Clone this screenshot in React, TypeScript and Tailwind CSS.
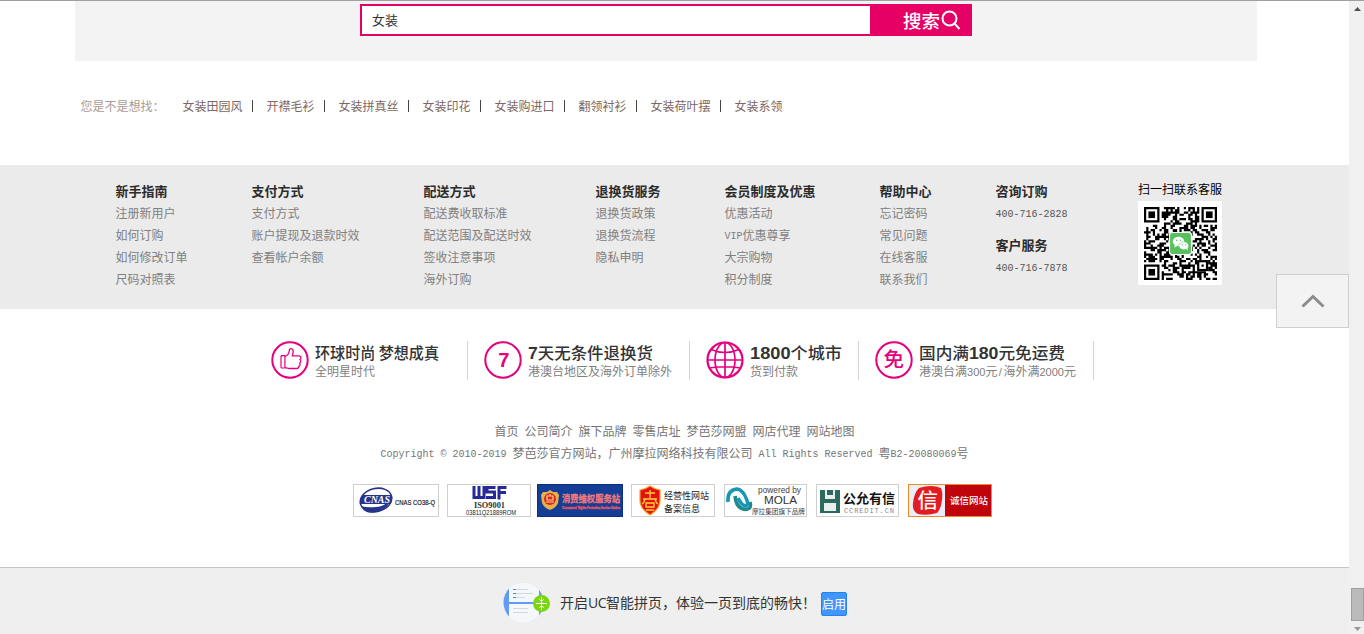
import type { ReactNode } from "react";

const suggestions = ["女装田园风", "开襟毛衫", "女装拼真丝", "女装印花", "女装购进口", "翻领衬衫", "女装荷叶摆", "女装系领"];

const helpColumns = [
  { title: "新手指南", width: "w-[136px]", links: ["注册新用户", "如何订购", "如何修改订单", "尺码对照表"] },
  { title: "支付方式", width: "w-[172px]", links: ["支付方式", "账户提现及退款时效", "查看帐户余额"] },
  { title: "配送方式", width: "w-[172px]", links: ["配送费收取标准", "配送范围及配送时效", "签收注意事项", "海外订购"] },
  { title: "退换货服务", width: "w-[129px]", links: ["退换货政策", "退换货流程", "隐私申明"] },
  { title: "会员制度及优惠", width: "w-[155px]", links: ["优惠活动", "VIP优惠尊享", "大宗购物", "积分制度"] },
  { title: "帮助中心", width: "w-[116px]", links: ["忘记密码", "常见问题", "在线客服", "联系我们"] },
];

const siteLinks = ["首页", "公司简介", "旗下品牌", "零售店址", "梦芭莎网盟", "网店代理", "网站地图"];

function Mono({ children }: { children: ReactNode }) {
  return <span className="relative -top-px whitespace-pre font-['Liberation_Mono',monospace] text-[10px]">{children}</span>;
}

function MixedText({ text }: { text: string }) {
  return (
    <>
      {text.split(/([\x20-\x7e]+)/).map((part, i) => (/^[\x20-\x7e]+$/.test(part) ? <Mono key={i}>{part}</Mono> : part))}
    </>
  );
}

const QR_SIZE = 33;

function qrPath() {
  let seed = 20190;
  let d = "";
  const inFinder = (x: number, y: number) => (x < 8 && y < 8) || (x > 24 && y < 8) || (x < 8 && y > 24);
  for (let y = 0; y < QR_SIZE; y++) {
    for (let x = 0; x < QR_SIZE; x++) {
      seed = (seed * 1103515245 + 12345) % 2147483648;
      const on = (seed >> 16) % 100 < 52;
      const inAlign = x >= 24 && x <= 28 && y >= 24 && y <= 28;
      if (on && !inFinder(x, y) && !inAlign) d += `M${x} ${y}h1v1h-1z`;
    }
  }
  return d;
}

function QrCode() {
  const finders = [
    [0, 0],
    [26, 0],
    [0, 26],
  ];
  return (
    <div className="h-[84px] w-[84px] bg-white p-[5.5px]">
      <svg viewBox="0 0 33 33" className="block h-[73px] w-[73px]">
        <path d={qrPath()} fill="#000" />
        {finders.map(([x, y]) => (
          <g key={`${x}-${y}`}>
            <rect x={x + 0.5} y={y + 0.5} width="6" height="6" fill="#fff" stroke="#000" />
            <rect x={x + 2} y={y + 2} width="3" height="3" />
          </g>
        ))}
        <rect x="24.5" y="24.5" width="4" height="4" fill="#fff" stroke="#000" />
        <rect x="26" y="26" width="1" height="1" />
        <rect x="11.3" y="11.3" width="10.4" height="10.4" rx="1.2" fill="#fff" />
        <rect x="11.8" y="11.8" width="9.4" height="9.4" rx="1" fill="#56c15d" />
        <ellipse cx="15.6" cy="15.6" rx="2.6" ry="2.1" fill="#fff" />
        <ellipse cx="18" cy="17.5" rx="2.2" ry="1.8" fill="#fff" stroke="#56c15d" strokeWidth=".25" />
        <path d="M14 17l-.4 1.3 1.6-.8zM18.8 18.8l1 .9-.2-1.3z" fill="#fff" />
        <g fill="#56c15d">
          <circle cx="14.8" cy="15" r=".35" />
          <circle cx="16.5" cy="15" r=".35" />
          <circle cx="17.3" cy="17" r=".3" />
          <circle cx="18.8" cy="17" r=".3" />
        </g>
      </svg>
    </div>
  );
}

function ThumbIcon() {
  return (
    <svg viewBox="0 0 38 38" className="h-[38px] w-[38px] shrink-0" fill="none" stroke="#e4007f">
      <circle cx="19" cy="19" r="17.7" strokeWidth="2" />
      <rect x="10" y="14.7" width="3.9" height="12.3" rx=".8" strokeWidth="1.2" />
      <path d="M13.9 15.3C16.5 14.5 18 12.3 18.2 10Q18.4 7.6 19.9 7.6C22 7.6 22.5 9.5 22 12L21.400 14.800H28Q30 15 30 16.700Q30 18 29 18.500Q30 19.500 29.700 20.500Q29.500 21.700 28.700 22Q29.400 23 29 24Q28.700 25 27.900 25.300Q28 27.200 26 27.500H18Q16.500 27.500 15.500 26.800H13.900" strokeWidth="1.300" />
    </svg>
  );
}

function SevenIcon() {
  return (
    <svg viewBox="0 0 38 38" className="h-[38px] w-[38px] shrink-0">
      <circle cx="19" cy="19" r="17.7" fill="none" stroke="#e4007f" strokeWidth="2" />
      <text x="19.7" y="26" textAnchor="middle" className="font-['Liberation_Sans',sans-serif] font-bold" fontSize="20" fill="#e4007f">7</text>
    </svg>
  );
}

function GlobeIcon() {
  return (
    <svg viewBox="0 0 38 38" className="h-[38px] w-[38px] shrink-0" fill="none" stroke="#e4007f" strokeWidth="1.7">
      <circle cx="19" cy="19" r="17.5" strokeWidth="2.2" />
      <ellipse cx="19" cy="19" rx="10" ry="17.5" />
      <path d="M19 1.5v35M1.5 19h35M5 8.500Q19 14.500 33 8.500M3.500 27Q19 24.500 34.500 27" />
    </svg>
  );
}

function FreeIcon() {
  return (
    <svg viewBox="0 0 38 38" className="h-[38px] w-[38px] shrink-0">
      <circle cx="19" cy="19" r="17.7" fill="none" stroke="#e4007f" strokeWidth="2" />
      <text x="18.7" y="25.5" textAnchor="middle" className="font-['Noto_Sans_CJK_SC',sans-serif]" fontWeight="500" fontSize="20.5" fill="#e4007f">免</text>
    </svg>
  );
}

const features = [
  { icon: <ThumbIcon />, title: "环球时尚 梦想成真", sub: "全明星时代", box: "w-[197px]", titleWidth: 124 },
  { icon: <SevenIcon />, title: "7天无条件退换货", sub: "港澳台地区及海外订单除外", box: "w-[222px] pl-[16px]", titleWidth: 125 },
  { icon: <GlobeIcon />, title: "1800个城市", sub: "货到付款", box: "w-[169px] pl-[16px]", titleWidth: 92 },
  { icon: <FreeIcon />, title: "国内满180元免运费", sub: "港澳台满300元/海外满2000元", box: "w-[235px] pl-[16px]", titleWidth: 146 },
];

function Badge({ width, border = "#cfcfcf", fill = "#fff", children }: { width: number; border?: string; fill?: string; children: ReactNode }) {
  return (
    <svg width={width} height="33" viewBox={`0 0 ${width} 33`} className="block shrink-0 font-['Noto_Sans_CJK_SC',sans-serif]">
      <rect x=".5" y=".5" width={width - 1} height="32" fill={fill} stroke={border} />
      {children}
    </svg>
  );
}

function Badges() {
  return (
    <div className="mt-[20px] ml-[353px] flex">
      <Badge width={86}>
        <ellipse cx="23" cy="16" rx="16" ry="11.5" transform="rotate(-14 23 16)" fill="none" stroke="#27348b" strokeWidth="1.6" />
        <path d="M8 22Q12 31 23 28Q34 26 38 15Q31 23 23 23Q14 24 8 22z" fill="#27348b" />
        <path d="M9 11h30l-1 9H7z" fill="#27348b" />
        <text x="11" y="19" fontSize="9.5" textLength="26" lengthAdjust="spacingAndGlyphs" className="font-['Liberation_Serif',serif] font-bold italic" fill="#fff">CNAS</text>
        <text x="42" y="21" fontSize="7" textLength="40" lengthAdjust="spacingAndGlyphs" className="font-['Liberation_Sans',sans-serif]" fill="#222" stroke="#222" strokeWidth=".2">CNAS CO38-Q</text>
      </Badge>
      <div className="w-[8px]" />
      <Badge width={84}>
        <g fill="none" stroke="#28289a" strokeWidth="3">
          <path d="M27 2v11.5h10V2M32 2v11M48.5 3.5H40v4.500h7.500v5.500H39M52 15.500V3.500h7.500M52 8.500h7" />
        </g>
        <text x="27" y="23.5" fontSize="7.5" textLength="31" lengthAdjust="spacingAndGlyphs" className="font-['Liberation_Serif',serif] font-bold" fill="#333">ISO9001</text>
        <text x="19" y="30.5" fontSize="7" textLength="50" lengthAdjust="spacingAndGlyphs" className="font-['Liberation_Sans',sans-serif]" fill="#222">03811Q21889ROM</text>
      </Badge>
      <div className="w-[6px]" />
      <Badge width={86} fill="#143e96" border="#0c2f7d">
        <path d="M13 6l3 2h4l2 3-1 8q-2 5-8 7-6-2-8-7l-1-8 2-3h4z" fill="#e8b04a" />
        <circle cx="13" cy="15" r="6" fill="#d7262b" />
        <path d="M10 12h6v4h-6zM9 18h8M13 10v2" stroke="#f8d873" strokeWidth="1.2" fill="none" />
        <text x="25" y="18" fontSize="9.5" textLength="58" lengthAdjust="spacingAndGlyphs" fontWeight="700" fill="#f4797b" stroke="#f4797b" strokeWidth=".3">消费维权服务站</text>
        <text x="25" y="25" fontSize="2.600" textLength="58" lengthAdjust="spacingAndGlyphs" className="font-['Liberation_Sans',sans-serif] font-bold" fill="#e45561" stroke="#e45561" strokeWidth=".3">Consumers' Rights Protection Service Station</text>
      </Badge>
      <div className="w-[8px]" />
      <Badge width={84}>
        <path d="M19 2q4 3 10 4v10q0 9-10 15Q9 25 9 16V6q6-1 10-4z" fill="#e60f14" stroke="#f5a11e" strokeWidth="1.2" />
        <path d="M14 9h10M19 6v9M12 15h14M14 15q-1 4-3 5M24 15q1 4 3 5M15 19h8v4h-8zM15 26h8" stroke="#ffd52e" strokeWidth="1.3" fill="none" />
        <text x="33" y="15" fontSize="9.5" textLength="45" lengthAdjust="spacingAndGlyphs" fill="#222">经营性网站</text>
        <text x="33" y="28" fontSize="9.5" textLength="36" lengthAdjust="spacingAndGlyphs" fill="#222">备案信息</text>
      </Badge>
      <div className="w-[9px]" />
      <Badge width={83}>
        <path d="M4 18Q3 6 13 5Q19 6 22 14Q25 20 22 22Q18 22 14 14" fill="none" stroke="#1597b5" strokeWidth="3.500" />
        <path d="M11 12Q12 25 22 25.500Q28 25 26 18" fill="none" stroke="#1d8a8e" strokeWidth="3.500" />
        <text x="34" y="8.5" fontSize="9" textLength="43" lengthAdjust="spacingAndGlyphs" className="font-['Liberation_Sans',sans-serif]" fill="#444">powered by</text>
        <text x="40" y="20" fontSize="11" textLength="33" lengthAdjust="spacingAndGlyphs" className="font-['Liberation_Sans',sans-serif]" fill="#333">MOLA</text>
        <text x="28" y="29.5" fontSize="7" textLength="53" lengthAdjust="spacingAndGlyphs" fill="#444">摩拉集团旗下品牌</text>
      </Badge>
      <div className="w-[9px]" />
      <Badge width={83}>
        <path d="M4 6h20v23H4z" fill="#2c6a60" />
        <path d="M9 6h10v9H9zM8 19h12v8H8z" fill="#e8efed" />
        <path d="M11 6h6v5h-6z" fill="#2c6a60" />
        <text x="27" y="18.5" fontSize="13" textLength="52" lengthAdjust="spacingAndGlyphs" fontWeight="700" fill="#111">公允有信</text>
        <text x="28" y="28.5" fontSize="7" textLength="50" className="font-['Liberation_Mono',monospace]" fill="#888">CCREDIT.CN</text>
      </Badge>
      <div className="w-[9px]" />
      <Badge width={84} border="#f08a24" fill="#e9eff8">
        <path d="M37 1h46v31H37z" fill="#c0040b" />
        <path d="M11 4q12-4 22 0 2 5 1 12-1 9-5 13-10 3-19 1-6-3-5-11 1-10 6-15z" fill="#e41b20" />
        <text x="9.5" y="23.5" fontSize="20.5" fontWeight="500" fill="#fff">信</text>
        <text x="42" y="20" fontSize="9" textLength="38" lengthAdjust="spacingAndGlyphs" fontWeight="500" fill="#fff">诚信网站</text>
      </Badge>
    </div>
  );
}

function PageIcon() {
  return (
    <svg viewBox="0 0 47 42" className="h-[42px] w-[47px] shrink-0">
      <defs>
        <clipPath id="disc">
          <circle cx="20.5" cy="20.5" r="20" />
        </clipPath>
      </defs>
      <circle cx="20.5" cy="20.5" r="20.5" fill="#e6eaef" />
      <g clipPath="url(#disc)">
        <path d="M0 0h42v42H0z" fill="#f5f8fb" />
        <path d="M0 6h6v29H0zM36 6h6v29h-6zM6 20h30v2H6z" fill="#639af5" />
        <path d="M10 7.5h15M10 11.5h20M10 15.5h12M10 26.5h15M10 30.5h15" stroke="#d1d8e1" />
        <path d="M10 7.5h3M10 11.5h3M10 15.5h3" stroke="#5287dd" />
      </g>
      <circle cx="38.5" cy="21.5" r="8.5" fill="#79d70f" />
      <path d="M33 21.5h11M38.500 15v13M36 17l2.500 2.500 2.500-2.500M36 26l2.500-2.500 2.500 2.500" fill="none" stroke="#fff" />
    </svg>
  );
}

export default function App() {
  return (
    <div className="relative flex h-[634px] w-[1364px] flex-col overflow-hidden border-t border-[#a0a0a0] bg-white font-['Noto_Sans_CJK_SC',sans-serif] text-[12px]">
      <div className="flex min-h-0 flex-1">
        <main className="flex w-[1349px] flex-col">
          <section className="ml-[75px] flex h-[60px] w-[1182px] items-start bg-[#f3f3f3] pt-[3px] pl-[285px]">
            <div className="flex h-[32px] w-[510px] items-center border-2 border-r-0 border-[#e60065] bg-white pl-[10px] text-[13px] text-[#333]">女装</div>
            <button className="flex h-[32px] w-[102px] items-center bg-[#e60065] pl-[33px] text-[18.5px] leading-none font-medium whitespace-nowrap text-white">
              搜索
              <svg viewBox="0 0 20 20" className="ml-[1px] h-[20px] w-[20px] shrink-0" fill="none" stroke="#fff" strokeWidth="2">
                <circle cx="8.5" cy="8.5" r="7" />
                <path d="M13 13l5.5 6" />
              </svg>
            </button>
          </section>

          <section className="flex h-[104px] items-start pt-[36px] pl-[80.5px] leading-[18px] text-[#80675f]">
            <span className="w-[102px] text-[#ab9a95]">您是不是想找：</span>
            {suggestions.map((word, i) => (
              <div key={word} className="flex items-center">
                {i > 0 && <span className="mr-[13.5px] ml-[9.5px] h-[12px] w-px bg-[#444]" />}
                <a>{word}</a>
              </div>
            ))}
          </section>

          <section className="flex h-[144px] bg-[#ebebeb] pt-[15px] pl-[115.5px] leading-[22px] text-[#808080]">
            {helpColumns.map((col) => (
              <div key={col.title} className={col.width}>
                <h3 className="text-[13px] font-bold text-[#2b2b2b]">{col.title}</h3>
                {col.links.map((link) => (
                  <p key={link} className="h-[22px]">
                    <MixedText text={link} />
                  </p>
                ))}
              </div>
            ))}
            <div className="w-[142px] text-[#555]">
              <h3 className="text-[13px] font-bold text-[#2b2b2b]">咨询订购</h3>
              <p className="h-[22px]"><Mono>400-716-2828</Mono></p>
              <h3 className="mt-[10px] text-[13px] font-bold text-[#2b2b2b]">客户服务</h3>
              <p className="h-[22px]"><Mono>400-716-7878</Mono></p>
            </div>
            <div className="ml-[0.5px]">
              <p className="-mt-[2px] h-[23px] text-black">扫一扫联系客服</p>
              <QrCode />
            </div>
          </section>

          <section className="flex h-[71px] items-end pl-[271px]">
            {features.map((f) => (
              <div key={f.title} className={`flex h-[39px] border-r border-[#d5d5d5] ${f.box}`}>
                {f.icon}
                <div className="ml-[6px] flex flex-col whitespace-nowrap">
                  <svg width={f.titleWidth} height="21" className="block overflow-visible">
                    <text x="0" y="18" fontSize="16" textLength={f.titleWidth} lengthAdjust="spacingAndGlyphs" className="font-['Noto_Sans_CJK_SC',sans-serif]" fontWeight="500" fill="#333">
                      {f.title.split(/(\d+)/).map((part, n) =>
                        /^\d/.test(part) ? <tspan key={n} className="font-['Liberation_Sans',sans-serif]" fontWeight="700" fontSize="17">{part}</tspan> : part,
                      )}
                    </text>
                  </svg>
                  <span className="leading-[18px] text-[#808080]">
                    {f.sub.split(/(\d+|\/)/).map((part, n) =>
                      /^[\d/]/.test(part) ? <span key={n} className="inline-block min-w-[6px] text-center font-['Liberation_Sans',sans-serif] text-[11px]">{part}</span> : part,
                    )}
                  </span>
                </div>
              </div>
            ))}
          </section>

          <section className="pt-[40px] leading-[22px] text-[#757575]">
            <nav className="flex justify-center gap-[6px]">
              {siteLinks.map((l) => (
                <a key={l}>{l}</a>
              ))}
            </nav>
            <p className="h-[22px] text-center">
              <MixedText text="Copyright " />
              <Mono>© </Mono>
              <MixedText text="2010-2019 梦芭莎官方网站，广州摩拉网络科技有限公司 All Rights Reserved 粤B2-20080069号" />
            </p>
            <Badges />
          </section>

          <footer className="mt-auto flex h-[67px] items-start border-t border-[#c5c5c5] bg-[#efefef] pt-[14px] pl-[503px]">
            <PageIcon />
            <span className="ml-[10px] h-[42px] w-[261px] text-[14px] leading-[40px] whitespace-nowrap text-[#333]">
              开启<span className="font-['Open_Sans',sans-serif] tracking-[-0.5px]">UC</span>智能拼页，体验一页到底的畅快！
            </span>
            <button className="mt-[10px] flex h-[24px] w-[26px] items-center justify-center rounded-[2px] border border-[#2482f0] bg-[#3f97fb] text-[12px] whitespace-nowrap text-white">启用</button>
          </footer>
        </main>

        <aside className="flex w-[15px] flex-col items-end bg-[#f0f0f0]">
          <svg viewBox="0 0 13 12" className="h-[12px] w-[13px]">
            <path d="M3 10l3.5-4 3.5 4z" fill="#505050" />
          </svg>
          <div className="mt-auto h-[33px] w-[13px] border border-[#a0a0a0] bg-[#bababa]" />
          <svg viewBox="0 0 13 13" className="h-[13px] w-[13px]">
            <path d="M3 6h7l-3.5 4z" fill="#999" />
          </svg>
        </aside>
      </div>

      <button className="absolute top-[273px] left-[1276px] flex h-[54px] w-[73px] items-center justify-center border border-[#cfcfcf] bg-[#f3f3f3]">
        <svg viewBox="0 0 24 14" className="h-[14px] w-[24px]" fill="none" stroke="#8c8c8c" strokeWidth="3">
          <path d="M1.5 12.5L12 2.5l10.5 10" />
        </svg>
      </button>
    </div>
  );
}
